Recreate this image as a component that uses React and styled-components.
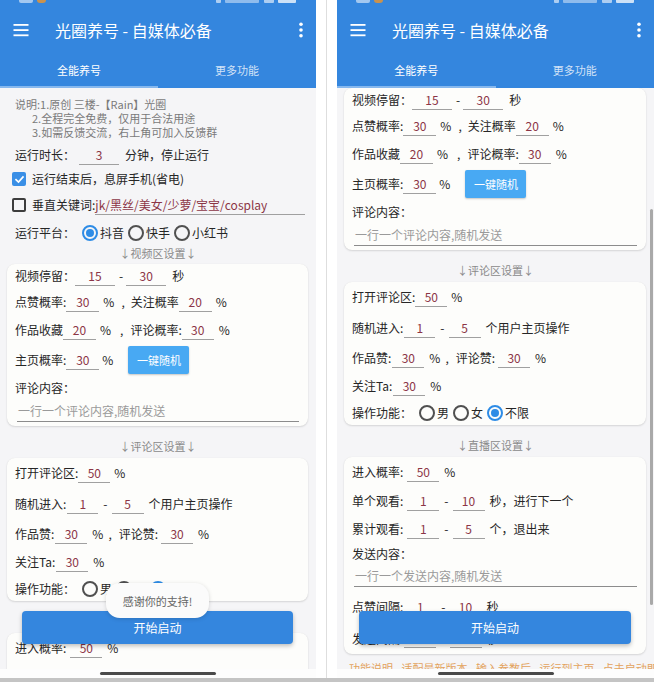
import React from 'react';
import styled, { createGlobalStyle } from 'styled-components';

const GlobalStyle = createGlobalStyle`
  * { box-sizing: border-box; }
  html, body { margin: 0; padding: 0; background: #fff; }
  body { font-family: "Noto Sans CJK SC", "Noto Sans", sans-serif; }
`;

const BLUE = '#3486de';

const Page = styled.div`
  width: 654px;
  height: 682px;
  display: flex;
  flex-direction: column;
  background: #fff;
  overflow: hidden;
`;
const Panels = styled.div`
  display: flex;
  height: 678px;
`;
const Divider = styled.div`
  width: 1px;
  margin: 0 10px;
  background: #dedede;
`;
const BottomRule = styled.div`
  height: 4px;
  background: #c4c4c4;
`;

const Phone = styled.div`
  position: relative;
  width: ${p => p.$w}px;
  display: flex;
  flex-direction: column;
  background: #fff;
  overflow: hidden;
`;

const AppBar = styled.div`
  background: ${BLUE};
  color: #fff;
  height: 88px;
  display: flex;
  flex-direction: column;
`;
const StatusBar = styled.div`
  height: 8px;
  overflow: hidden;
`;
const StatusRow = styled.div`
  display: flex;
  align-items: flex-end;
  height: 12px;
  margin-top: -9px;
  padding: 0 20px 0 19px;
`;
const StatusTime = styled.span`
  width: 14px;
  height: 12px;
  border-radius: 2px;
  background: rgba(255, 255, 255, 0.55);
`;
const StatusDot = styled.span`
  width: 9px;
  height: 12px;
  margin-left: 4px;
  border-radius: 3px;
  background: #c9924e;
`;
const StatusIcon = styled.span`
  width: ${p => p.$w}px;
  height: 12px;
  margin-left: ${p => p.$ml || 0}px;
  border-radius: 1px;
  background: rgba(255, 255, 255, ${p => p.$a || 0.6});
`;
const Spacer = styled.span`
  flex: 1;
`;

const Toolbar = styled.div`
  height: 44px;
  display: flex;
  align-items: center;
  padding: 0 13px 0 13px;
`;
const Title = styled.div`
  margin-left: 26px;
  font-size: 16px;
  font-weight: 400;
`;
const Tabs = styled.div`
  height: 36px;
  display: flex;
`;
const Tab = styled.div`
  flex: 1;
  display: flex;
  align-items: center;
  justify-content: center;
  font-size: 11px;
  color: ${p => (p.$active ? '#fff' : 'rgba(255,255,255,0.78)')};
  border-bottom: 2px solid ${p => (p.$active ? '#86b8ee' : 'transparent')};
  padding-top: 2px;
`;

const Viewport = styled.div`
  height: 581px;
  background: #f5f5f7;
  overflow: hidden;
`;
const Scroller = styled.div`
  margin-top: -${p => p.$offset}px;
`;
const NavBar = styled.div`
  height: 9px;
  display: flex;
  justify-content: center;
  padding-top: 3px;
  background: #fdfdfd;
`;
const HomeBar = styled.div`
  width: 116px;
  height: 3px;
  border-radius: 2px;
  background: #4a4a4a;
`;

const Notes = styled.div`
  padding: 9px 0 3px 15px;
`;
const NoteLine = styled.div`
  font-size: 11px;
  line-height: 14px;
  color: #7a7a7a;
  padding-left: ${p => (p.$indent ? 17 : 0)}px;
  white-space: nowrap;
`;
const TopSection = styled.div`
  padding-left: 15px;
`;
const Row = styled.div`
  display: flex;
  align-items: ${p => (p.$top ? 'flex-start' : 'center')};
  height: ${p => p.$h || 28}px;
  font-size: 12px;
  color: #262626;
  white-space: nowrap;
`;
const Txt = styled.span`
  margin-left: ${p => p.$ml || 0}px;
  line-height: 16px;
`;
const Field = styled.span`
  display: inline-flex;
  align-items: center;
  justify-content: ${p => (p.$left ? 'flex-start' : 'center')};
  width: ${p => (p.$w ? `${p.$w}px` : 'auto')};
  flex: ${p => (p.$grow ? 1 : 'none')};
  height: 19px;
  margin-left: ${p => p.$ml || 0}px;
  margin-right: ${p => p.$mr || 0}px;
  border-bottom: 1px solid #a0a0a0;
  color: #8c3546;
  font-size: 12px;
`;
const Placeholder = styled.div`
  flex: 1;
  height: 21px;
  margin: 1px 1px 0 2px;
  padding-left: 1px;
  line-height: 20px;
  font-size: 12px;
  color: #9a9a9a;
  border-bottom: 1px solid #8c8c8c;
`;
const CheckBox = styled.span`
  width: 14px;
  height: 14px;
  margin-left: -3px;
  border-radius: 2px;
  display: inline-flex;
  align-items: center;
  justify-content: center;
  background: ${p => (p.$on ? '#3a8fe6' : 'transparent')};
  border: ${p => (p.$on ? 'none' : '2px solid #3d3d3d')};
`;
const RadioDot = styled.span`
  width: 16px;
  height: 16px;
  border-radius: 50%;
  margin-left: ${p => p.$ml || 0}px;
  border: 2px solid ${p => (p.$on ? '#2e8ce6' : '#505050')};
  display: inline-flex;
  align-items: center;
  justify-content: center;
  flex: none;
  &::after {
    content: '';
    width: 8px;
    height: 8px;
    border-radius: 50%;
    background: ${p => (p.$on ? '#2e8ce6' : 'transparent')};
  }
`;
const RadioText = styled.span`
  margin: 0 4px 0 2px;
  line-height: 16px;
`;
const MiniButton = styled.span`
  margin-left: 15px;
  width: 61px;
  height: 28px;
  border-radius: 2px;
  background: #48a9f3;
  color: #fff;
  font-size: 11px;
  display: flex;
  align-items: center;
  justify-content: center;
  box-shadow: 0 1px 2px rgba(0, 0, 0, 0.22);
`;
const SectionTitle = styled.div`
  height: ${p => p.$h}px;
  padding-top: ${p => p.$pt}px;
  text-align: center;
  font-size: 11px;
  line-height: 16px;
  color: #8a8a8a;
`;
const Card = styled.div`
  margin: 0 8px 0 7px;
  padding: 0 8px;
  background: #fdfdfb;
  border-radius: 8px;
  box-shadow: 0 1px 2px rgba(0, 0, 0, 0.13), 0 0 1px rgba(0, 0, 0, 0.08);
`;
const FooterLinks = styled.div`
  margin-top: 7px;
  padding-left: 12px;
  font-size: 11px;
  line-height: 14px;
  color: #e3a35e;
  white-space: nowrap;
  word-spacing: 6px;
`;

const StartButton = styled.div`
  position: absolute;
  top: 611px;
  left: 22px;
  right: 23px;
  height: 33px;
  border-radius: 4px;
  background: ${BLUE};
  color: #fff;
  font-size: 12px;
  display: flex;
  align-items: center;
  justify-content: center;
  box-shadow: 0 2px 4px rgba(0, 0, 0, 0.25);
`;
const Toast = styled.div`
  position: absolute;
  top: 583px;
  left: 106px;
  width: 103px;
  height: 35px;
  border-radius: 14px;
  background: #fbfbfb;
  color: #666;
  font-size: 11px;
  display: flex;
  align-items: center;
  justify-content: center;
  box-shadow: 0 1px 4px rgba(0, 0, 0, 0.15);
`;
const ScrollThumb = styled.div`
  position: absolute;
  top: 209px;
  right: 1px;
  width: 3px;
  height: 396px;
  border-radius: 2px;
  background: #a9a9a9;
`;

const Radios = ({ items, on, ml }) => (
  <>
    {items.map((t, i) => (
      <React.Fragment key={t}>
        <RadioDot $on={i === on} $ml={i === 0 ? ml : 0} />
        <RadioText>{t}</RadioText>
      </React.Fragment>
    ))}
  </>
);

const CheckMark = () => (
  <svg width="11" height="11" viewBox="0 0 12 12">
    <path d="M2.2 6.2 L4.9 8.8 L9.8 3.3" fill="none" stroke="#fff" strokeWidth="1.8" strokeLinecap="square" />
  </svg>
);

const MenuIcon = () => (
  <svg width="16" height="14" viewBox="0 0 16 14">
    <rect x="0.5" y="1" width="15" height="1.8" fill="#fff" />
    <rect x="0.5" y="6.2" width="15" height="1.8" fill="#fff" />
    <rect x="0.5" y="11.4" width="15" height="1.8" fill="#fff" />
  </svg>
);

const MoreIcon = () => (
  <svg width="4" height="16" viewBox="0 0 4 16">
    <circle cx="2" cy="2.2" r="1.8" fill="#fff" />
    <circle cx="2" cy="8" r="1.8" fill="#fff" />
    <circle cx="2" cy="13.8" r="1.8" fill="#fff" />
  </svg>
);

const FormBody = () => (
  <>
    <Notes>
      <NoteLine>说明:1.原创 三楼-【Rain】光圈</NoteLine>
      <NoteLine $indent>2.全程完全免费，仅用于合法用途</NoteLine>
      <NoteLine $indent>3.如需反馈交流，右上角可加入反馈群</NoteLine>
    </Notes>
    <TopSection>
      <Row $h={26}>
        <Txt>运行时长：</Txt>
        <Field $w={40} $ml={4}>3</Field>
        <Txt $ml={6}>分钟，停止运行</Txt>
      </Row>
      <Row $h={22}>
        <CheckBox $on><CheckMark /></CheckBox>
        <Txt $ml={6}>运行结束后，息屏手机(省电)</Txt>
      </Row>
      <Row $h={30}>
        <CheckBox />
        <Txt $ml={6}>垂直关键词:</Txt>
        <Field $grow $left $mr={11}>jk/黑丝/美女/少萝/宝宝/cosplay</Field>
      </Row>
      <Row $h={25}>
        <Txt>运行平台：</Txt>
        <Radios items={['抖音', '快手', '小红书']} on={0} ml={7} />
      </Row>
    </TopSection>
    <SectionTitle $h={19} $pt={0}>↓视频区设置↓</SectionTitle>
    <Card>
      <Row $h={24}>
        <Txt>视频停留：</Txt>
        <Field $w={40}>15</Field>
        <Txt $ml={4}>-</Txt>
        <Field $w={40} $ml={3}>30</Field>
        <Txt $ml={6}>秒</Txt>
      </Row>
      <Row>
        <Txt>点赞概率:</Txt>
        <Field $w={33}>30</Field>
        <Txt $ml={4}>%</Txt>
        <Txt $ml={7}>,</Txt>
        <Txt $ml={6}>关注概率</Txt>
        <Field $w={33}>20</Field>
        <Txt $ml={4}>%</Txt>
      </Row>
      <Row>
        <Txt>作品收藏</Txt>
        <Field $w={33}>20</Field>
        <Txt $ml={4}>%</Txt>
        <Txt $ml={9}>,</Txt>
        <Txt $ml={7}>评论概率:</Txt>
        <Field $w={32}>30</Field>
        <Txt $ml={5}>%</Txt>
      </Row>
      <Row $h={32}>
        <Txt>主页概率:</Txt>
        <Field $w={33}>30</Field>
        <Txt $ml={3}>%</Txt>
        <MiniButton>一键随机</MiniButton>
      </Row>
      <Row $h={24}>
        <Txt>评论内容：</Txt>
      </Row>
      <Row $h={26} $top>
        <Placeholder>一行一个评论内容,随机发送</Placeholder>
      </Row>
    </Card>
    <SectionTitle $h={32} $pt={12}>↓评论区设置↓</SectionTitle>
    <Card>
      <Row $h={30}>
        <Txt>打开评论区:</Txt>
        <Field $w={32}>50</Field>
        <Txt $ml={4}>%</Txt>
      </Row>
      <Row $h={32}>
        <Txt>随机进入:</Txt>
        <Field $w={31} $ml={1}>1</Field>
        <Txt $ml={5}>-</Txt>
        <Field $w={32} $ml={4}>5</Field>
        <Txt $ml={5}>个用户主页操作</Txt>
      </Row>
      <Row>
        <Txt>作品赞:</Txt>
        <Field $w={32} $ml={1}>30</Field>
        <Txt $ml={5}>%</Txt>
        <Txt $ml={5}>,</Txt>
        <Txt $ml={7}>评论赞:</Txt>
        <Field $w={32} $ml={3}>30</Field>
        <Txt $ml={5}>%</Txt>
      </Row>
      <Row>
        <Txt>关注Ta:</Txt>
        <Field $w={32} $ml={1}>30</Field>
        <Txt $ml={5}>%</Txt>
      </Row>
      <Row $h={25}>
        <Txt>操作功能：</Txt>
        <Radios items={['男', '女', '不限']} on={2} ml={7} />
      </Row>
    </Card>
    <SectionTitle $h={32} $pt={12}>↓直播区设置↓</SectionTitle>
    <Card>
      <Row $h={30}>
        <Txt>进入概率:</Txt>
        <Field $w={32} $ml={4}>50</Field>
        <Txt $ml={5}>%</Txt>
      </Row>
      <Row>
        <Txt>单个观看:</Txt>
        <Field $w={32} $ml={4}>1</Field>
        <Txt $ml={5}>-</Txt>
        <Field $w={32} $ml={4}>10</Field>
        <Txt $ml={5}>秒，进行下一个</Txt>
      </Row>
      <Row>
        <Txt>累计观看:</Txt>
        <Field $w={32} $ml={4}>1</Field>
        <Txt $ml={5}>-</Txt>
        <Field $w={32} $ml={4}>5</Field>
        <Txt $ml={5}>个，退出来</Txt>
      </Row>
      <Row $h={22}>
        <Txt>发送内容：</Txt>
      </Row>
      <Row $h={26} $top>
        <Placeholder>一行一个发送内容,随机发送</Placeholder>
      </Row>
      <Row $h={32}>
        <Txt>点赞间隔:</Txt>
        <Field $w={32} $ml={1}>1</Field>
        <Txt $ml={5}>-</Txt>
        <Field $w={32} $ml={4}>10</Field>
        <Txt $ml={5}>秒</Txt>
      </Row>
      <Row $h={31}>
        <Txt>发送间隔:</Txt>
        <Field $w={32} $ml={1}>1</Field>
        <Txt $ml={5}>-</Txt>
        <Field $w={32} $ml={4}>10</Field>
        <Txt $ml={5}>秒</Txt>
      </Row>
    </Card>
    <FooterLinks>功能说明 适配最新版本 输入参数后 运行到主页 点击启动即可</FooterLinks>
  </>
);

const Screen = ({ width, offset, toast, scrollbar }) => (
  <Phone $w={width}>
    <AppBar>
      <StatusBar>
        <StatusRow>
          <StatusTime />
          <StatusDot />
          <Spacer />
          <StatusIcon $w={5} />
          <StatusIcon $w={34} $ml={4} $a={0.45} />
          <StatusIcon $w={10} $ml={5} />
          <StatusIcon $w={18} $ml={4} $a={0.75} />
        </StatusRow>
      </StatusBar>
      <Toolbar>
        <MenuIcon />
        <Title>光圈养号 - 自媒体必备</Title>
        <Spacer />
        <MoreIcon />
      </Toolbar>
      <Tabs>
        <Tab $active>全能养号</Tab>
        <Tab>更多功能</Tab>
      </Tabs>
    </AppBar>
    <Viewport>
      <Scroller $offset={offset}>
        <FormBody />
      </Scroller>
    </Viewport>
    <NavBar>
      <HomeBar />
    </NavBar>
    <StartButton>开始启动</StartButton>
    {toast && <Toast>感谢你的支持!</Toast>}
    {scrollbar && <ScrollThumb />}
  </Phone>
);

export default function App() {
  return (
    <>
      <GlobalStyle />
      <Page>
        <Panels>
          <Screen width={316} offset={0} toast />
          <Divider />
          <Screen width={317} offset={176} scrollbar />
        </Panels>
        <BottomRule />
      </Page>
    </>
  );
}
